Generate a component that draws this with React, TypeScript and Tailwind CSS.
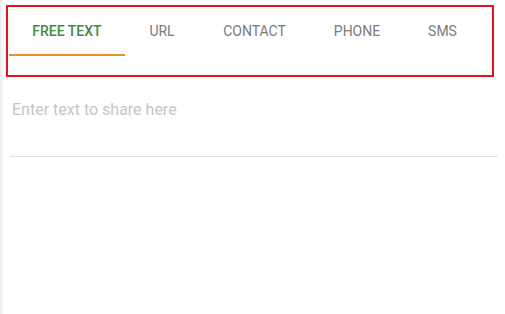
import React, { useState } from "react";

const tabs = [
  { label: "FREE TEXT", width: "w-[116px]" },
  { label: "URL", width: "w-[74px]" },
  { label: "CONTACT", width: "w-[111px]" },
  { label: "PHONE", width: "w-[94px]" },
  { label: "SMS", width: "w-[77px]" },
];

export default function App() {
  const [active, setActive] = useState(0);

  return (
    <div
      className="h-[314px] w-[505px] bg-white shadow-[inset_4px_0_3px_-2px_rgba(0,0,0,0.08)] pt-[5px]"
      style={{ fontFamily: "Roboto, 'Liberation Sans', sans-serif" }}
    >
      <div className="ml-[6px] w-[488px] h-[72px] border-2 border-[#e0141e] pl-[1px] pt-[1px]">
        <div className="flex h-[48px]">
          {tabs.map((t, i) => (
            <button
              key={t.label}
              onClick={() => setActive(i)}
              className={`${t.width} h-[48px] flex items-center justify-center pt-[1px] text-[14px] border-b-2 ${
                i === active
                  ? "text-[#43893d] font-medium border-[#e3942a]"
                  : "text-[#7a7a7a] border-transparent"
              }`}
            >
              {t.label}
            </button>
          ))}
        </div>
      </div>

      <div className="pl-[10px] mt-[19px]">
        <textarea
          placeholder="Enter text to share here"
          className="block w-[488px] h-[61px] resize-none outline-none px-[2px] pt-[1px] text-[16px] leading-[26px] text-[#424242] placeholder:text-[#c6c6c6] border-b border-[#e0e0e0] bg-transparent"
        />
      </div>
    </div>
  );
}
